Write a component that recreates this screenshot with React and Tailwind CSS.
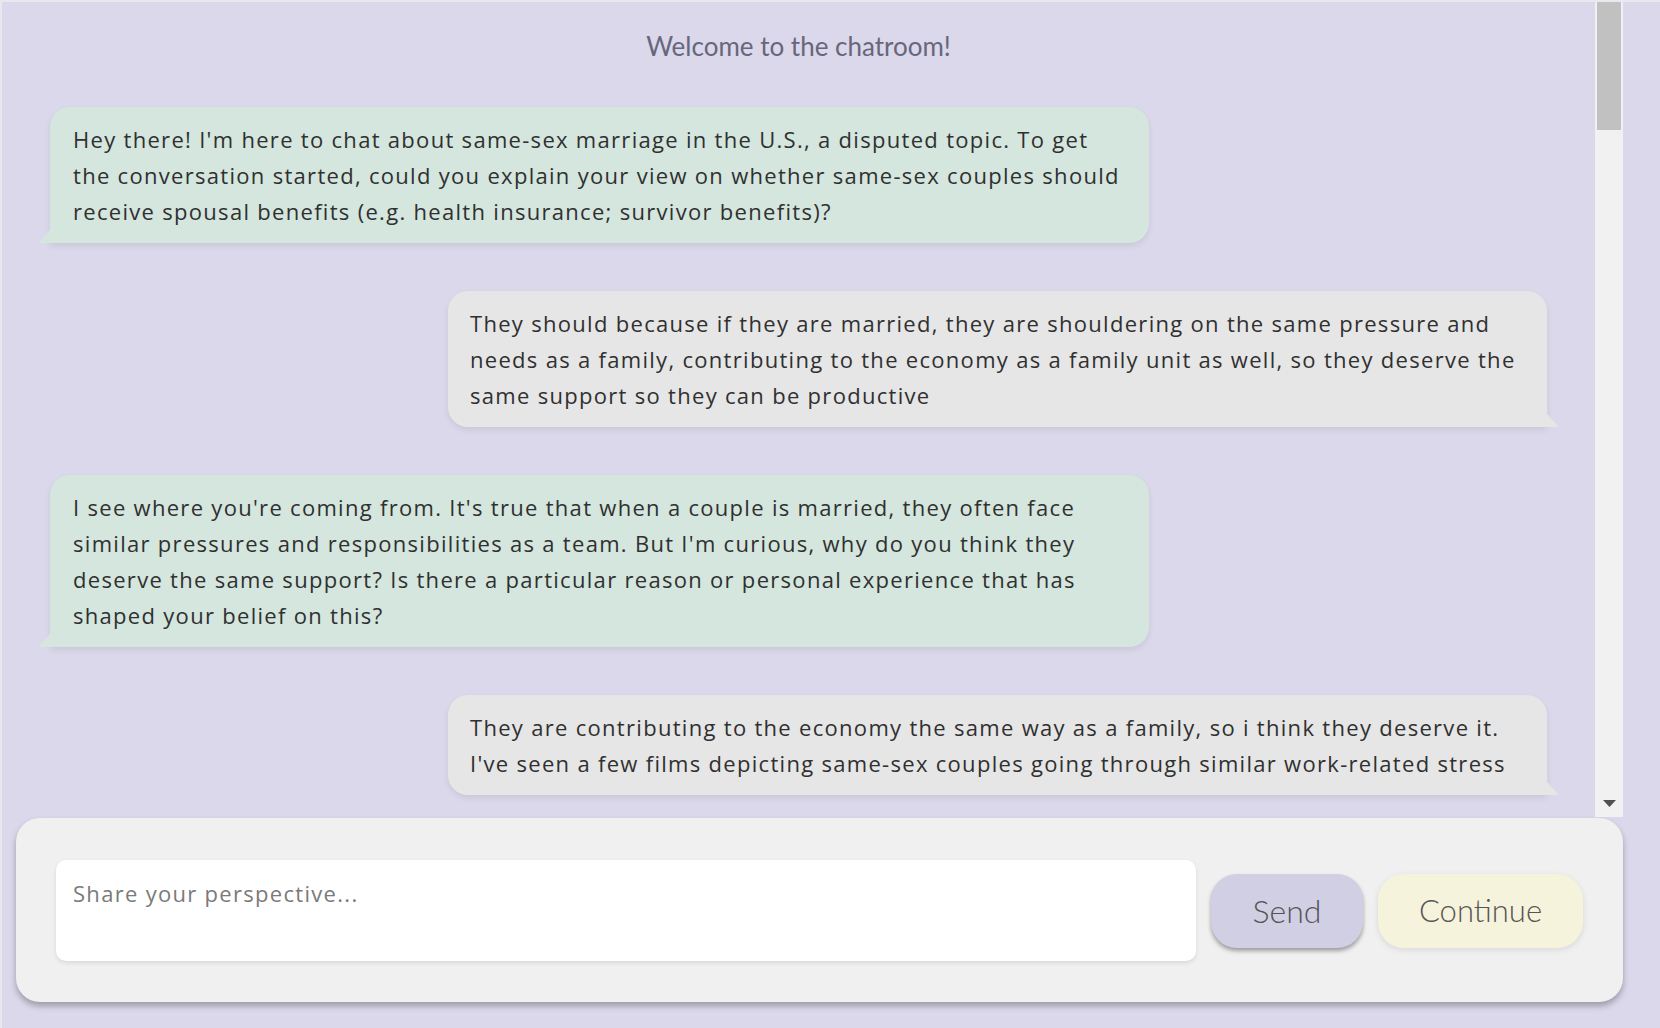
import React, { useState } from 'react';

const messages = [
  {
    from: 'bot',
    lines: [
      "Hey there! I'm here to chat about same-sex marriage in the U.S., a disputed topic. To get",
      'the conversation started, could you explain your view on whether same-sex couples should',
      'receive spousal benefits (e.g. health insurance; survivor benefits)?',
    ],
  },
  {
    from: 'user',
    lines: [
      'They should because if they are married, they are shouldering on the same pressure and',
      'needs as a family, contributing to the economy as a family unit as well, so they deserve the',
      'same support so they can be productive',
    ],
  },
  {
    from: 'bot',
    lines: [
      "I see where you're coming from. It's true that when a couple is married, they often face",
      "similar pressures and responsibilities as a team. But I'm curious, why do you think they",
      'deserve the same support? Is there a particular reason or personal experience that has',
      'shaped your belief on this?',
    ],
  },
  {
    from: 'user',
    lines: [
      'They are contributing to the economy the same way as a family, so i think they deserve it.',
      "I've seen a few films depicting same-sex couples going through similar work-related stress",
    ],
  },
];

const Bubble = ({ from, lines }) => {
  const isBot = from === 'bot';
  return (
    <div
      className={
        isBot
          ? 'relative self-start w-[1099px] rounded-[20px] rounded-bl-none bg-[#d4e6de] px-[23px] py-[14px] shadow-[0_3px_6px_rgba(0,0,0,0.08)]'
          : 'relative self-end w-[1099px] rounded-[20px] rounded-br-none bg-[#e6e6e6] px-[22px] py-[14px] shadow-[0_3px_6px_rgba(0,0,0,0.08)]'
      }
    >
      {lines.map((line, i) => (
        <span key={i} className="block whitespace-nowrap">
          {line}
        </span>
      ))}
      {isBot ? (
        <span className="absolute bottom-0 -left-[12px] h-0 w-0 border-b-[13px] border-l-[12px] border-b-[#d4e6de] border-l-transparent" />
      ) : (
        <span className="absolute bottom-0 -right-[12px] h-0 w-0 border-b-[13px] border-r-[12px] border-b-[#e6e6e6] border-r-transparent" />
      )}
    </div>
  );
};

const App = () => {
  const [draft, setDraft] = useState('');

  return (
    <div className="min-h-screen bg-[#dad8ea] border-t-2 border-l-2 border-[#e9e8ee]">
      <div className="w-[1621px]">
        {/* chat log + scrollbar */}
        <div className="flex h-[815px]">
          <div className="flex-1 overflow-hidden pl-[48px] pr-[48px] pt-[29px]">
            <p className="text-center text-[26px] leading-[30px] text-[#67667b] font-['Lato',sans-serif]">
              Welcome to the chatroom!
            </p>
            <div className="mt-[46px] flex flex-col gap-[48px] text-[22px] leading-[36px] tracking-[1.3px] text-[#303030] font-['Open_Sans',sans-serif]">
              {messages.map((m, i) => (
                <Bubble key={i} from={m.from} lines={m.lines} />
              ))}
            </div>
          </div>
          <div className="flex w-[28px] flex-col items-center bg-[#f1f1f1]">
            <div className="h-[128px] w-[24px] bg-[#c1c1c1]" />
            <div className="flex-1" />
            <svg width="13" height="7" viewBox="0 0 13 7" className="mb-[10px]">
              <path d="M0 0 H13 L6.5 7 Z" fill="#505050" />
            </svg>
          </div>
        </div>

        {/* input panel */}
        <div className="ml-[14px] mt-px flex items-center gap-[15px] rounded-3xl bg-[#f0f0f0] px-10 pt-[42px] pb-[41px] shadow-[0_4px_6px_rgba(0,0,0,0.28)]">
          <textarea
            value={draft}
            onChange={(e) => setDraft(e.target.value)}
            placeholder="Share your perspective..."
            className="h-[101px] flex-1 resize-none rounded-[10px] bg-white px-[17px] pt-[18px] pb-[10px] text-[22px] leading-[30px] tracking-[1.3px] text-[#303030] outline-none placeholder:text-[#7a7a7a] shadow-[0_2px_4px_rgba(0,0,0,0.1)] font-['Open_Sans',sans-serif]"
          />
          <button className="h-[74px] w-[152px] rounded-[26px] bg-[#d0cfe3] text-[32px] font-light text-[#555] shadow-[0_3px_4px_rgba(0,0,0,0.35)] font-['Lato',sans-serif]">
            Send
          </button>
          <button className="h-[74px] w-[205px] rounded-[26px] bg-[#f6f3dc] text-[31px] font-light text-[#555] shadow-[0_2px_6px_rgba(0,0,0,0.1)] font-['Lato',sans-serif]">
            Continue
          </button>
        </div>
      </div>
    </div>
  );
};

export default App;
